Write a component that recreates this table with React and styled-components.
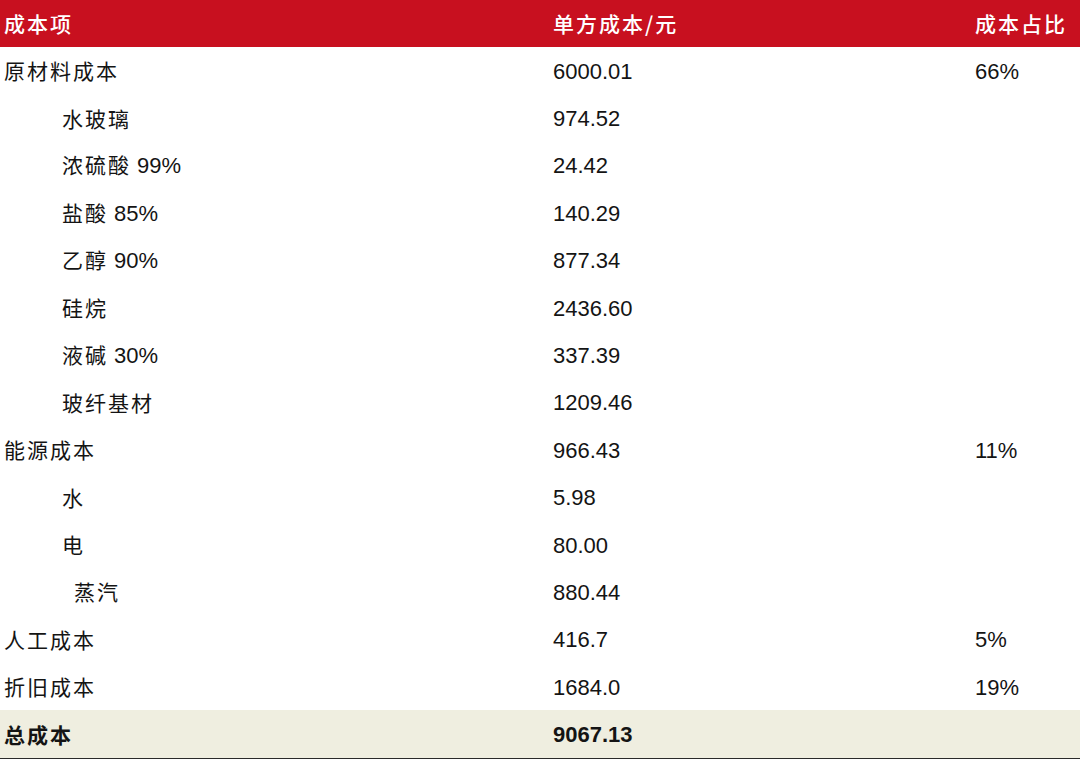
import React from "react";
import styled, { createGlobalStyle } from "styled-components";

const GlobalStyle = createGlobalStyle`
  html, body {
    margin: 0;
    padding: 0;
    background: #ffffff;
  }
  body {
    font-family: "Liberation Sans", "Noto Sans CJK SC", sans-serif;
    color: #141414;
  }
`;

const Table = styled.div`
  width: 1080px;
  display: flex;
  flex-direction: column;
`;

const Row = styled.div`
  display: grid;
  grid-template-columns: 549px 422px 1fr;
  align-items: center;
  height: ${(p) => (p.$head ? "47px" : "47.4px")};
  padding-left: 4px;
  background: ${(p) => (p.$head ? "#c8101f" : p.$total ? "#efeee0" : "#ffffff")};
  color: ${(p) => (p.$head ? "#ffffff" : "#141414")};
  border-bottom: ${(p) => (p.$total ? "1.5px solid #2a2a2a" : "none")};
`;

const Label = styled.div`
  padding-left: ${(p) => p.$indent || 0}px;
  font-family: "Liberation Sans", "Noto Sans CJK SC", sans-serif;
  font-size: 21px;
  line-height: 1;
  letter-spacing: 2px;
  font-weight: ${(p) => (p.$bold ? 700 : 400)};
  white-space: nowrap;
  transform: translateY(1px);
`;

const Num = styled.div`
  font-family: "Liberation Sans", "Noto Sans CJK SC", sans-serif;
  font-size: 22px;
  line-height: 1;
  font-weight: ${(p) => (p.$bold ? 700 : 400)};
  transform: translateY(1px);
`;

const HeadCell = styled.div`
  font-family: "Noto Sans CJK SC", sans-serif;
  font-size: 21px;
  line-height: 1;
  font-weight: 500;
  letter-spacing: 2px;
  white-space: nowrap;
`;

const rows = [
  { name: "原材料成本", cost: "6000.01", share: "66%" },
  { name: "水玻璃", cost: "974.52", indent: 58 },
  { name: "浓硫酸", tail: " 99%", cost: "24.42", indent: 58 },
  { name: "盐酸", tail: " 85%", cost: "140.29", indent: 58 },
  { name: "乙醇", tail: " 90%", cost: "877.34", indent: 58 },
  { name: "硅烷", cost: "2436.60", indent: 58 },
  { name: "液碱", tail: " 30%", cost: "337.39", indent: 58 },
  { name: "玻纤基材", cost: "1209.46", indent: 58 },
  { name: "能源成本", cost: "966.43", share: "11%" },
  { name: "水", cost: "5.98", indent: 58 },
  { name: "电", cost: "80.00", indent: 58 },
  { name: "蒸汽", cost: "880.44", indent: 70 },
  { name: "人工成本", cost: "416.7", share: "5%" },
  { name: "折旧成本", cost: "1684.0", share: "19%" },
];

const Tail = styled.span`
  font-size: 22px;
  letter-spacing: 0;
`;

export default function App() {
  return (
    <>
      <GlobalStyle />
      <Table>
        <Row $head>
          <HeadCell>成本项</HeadCell>
          <HeadCell>单方成本/元</HeadCell>
          <HeadCell>成本占比</HeadCell>
        </Row>
        {rows.map((r, i) => (
          <Row key={i}>
            <Label $indent={r.indent}>
              {r.name}
              {r.tail && <Tail>{r.tail}</Tail>}
            </Label>
            <Num>{r.cost}</Num>
            <Num>{r.share || ""}</Num>
          </Row>
        ))}
        <Row $total>
          <Label $bold>总成本</Label>
          <Num $bold>9067.13</Num>
          <Num />
        </Row>
      </Table>
    </>
  );
}
